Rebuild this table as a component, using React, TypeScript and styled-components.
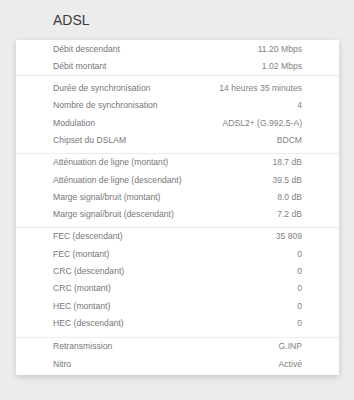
import styled, { createGlobalStyle } from 'styled-components';

const GlobalStyle = createGlobalStyle`
  html, body {
    margin: 0;
    padding: 0;
    background: #ececec;
  }
  body {
    font-family: "Liberation Sans", Arial, sans-serif;
  }
`;

const Page = styled.div`
  width: 354px;
  height: 400px;
  box-sizing: border-box;
  padding: 12px 15px 0 16px;
  background: #ececec;
`;

const Title = styled.h1`
  margin: 0 0 12px;
  padding-left: 37px;
  font-size: 14px;
  line-height: 16px;
  font-weight: normal;
  color: #3a3a3a;
`;

const Card = styled.div`
  background: #ffffff;
  box-shadow: 0 2px 6px rgba(0, 0, 0, 0.16);
  padding: 0.5px 0 2px;
`;

const Group = styled.div`
  padding: 0 0 4px;
  & + & {
    border-top: 1px solid #ececec;
  }
  &:first-child {
    padding-bottom: 0;
  }
  &:nth-child(2) {
    padding-top: 4px;
  }
  &:nth-child(4) {
    padding-bottom: 5px;
  }
  &:last-child {
    padding-bottom: 0;
  }
`;

const Row = styled.div`
  display: flex;
  justify-content: space-between;
  padding: 0 37px;
  height: 17.3px;
  line-height: 17.3px;
  font-size: 8.6px;
`;

const Label = styled.span`
  color: #777777;
`;

const Value = styled.span`
  color: #828282;
`;

const groups: [string, string][][] = [
  [
    ['Débit descendant', '11.20 Mbps'],
    ['Débit montant', '1.02 Mbps'],
  ],
  [
    ['Durée de synchronisation', '14 heures 35 minutes'],
    ['Nombre de synchronisation', '4'],
    ['Modulation', 'ADSL2+ (G.992.5-A)'],
    ['Chipset du DSLAM', 'BDCM'],
  ],
  [
    ['Atténuation de ligne (montant)', '18.7 dB'],
    ['Atténuation de ligne (descendant)', '39.5 dB'],
    ['Marge signal/bruit (montant)', '8.0 dB'],
    ['Marge signal/bruit (descendant)', '7.2 dB'],
  ],
  [
    ['FEC (descendant)', '35 809'],
    ['FEC (montant)', '0'],
    ['CRC (descendant)', '0'],
    ['CRC (montant)', '0'],
    ['HEC (montant)', '0'],
    ['HEC (descendant)', '0'],
  ],
  [
    ['Retransmission', 'G.INP'],
    ['Nitro', 'Activé'],
  ],
];

export default function App() {
  return (
    <>
      <GlobalStyle />
      <Page>
        <Title>ADSL</Title>
        <Card>
          {groups.map((rows, i) => (
            <Group key={i}>
              {rows.map(([label, value]) => (
                <Row key={label}>
                  <Label>{label}</Label>
                  <Value>{value}</Value>
                </Row>
              ))}
            </Group>
          ))}
        </Card>
      </Page>
    </>
  );
}
